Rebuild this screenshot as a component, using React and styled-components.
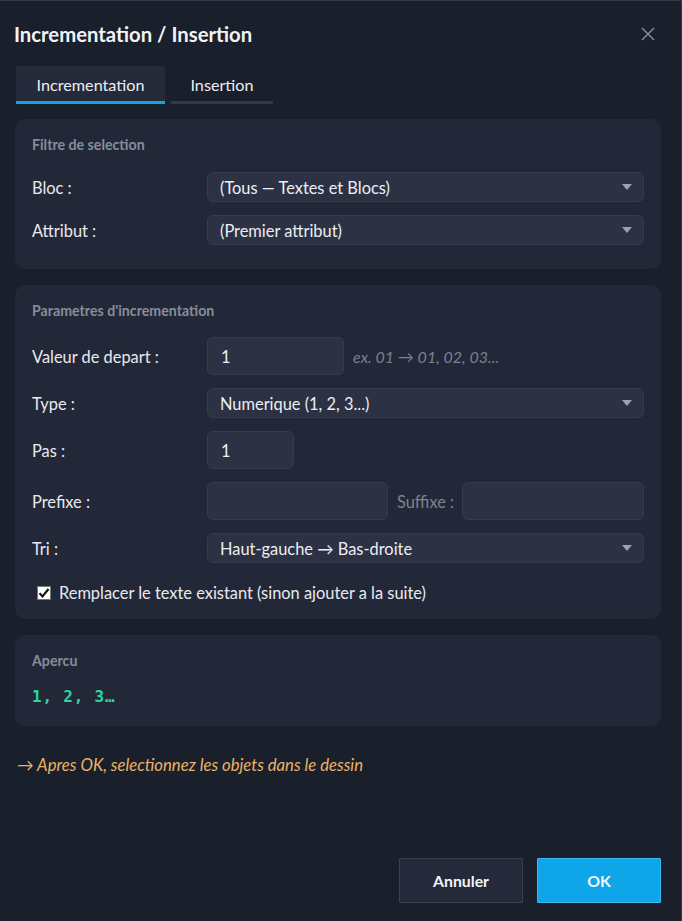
import React from "react";
import styled, { createGlobalStyle } from "styled-components";

const Global = createGlobalStyle`
  html, body { margin: 0; padding: 0; background: #1a1f2c; }
  * { box-sizing: border-box; }
  body { font-family: Lato, "Noto Sans", "Liberation Sans", sans-serif; }
`;

const Dialog = styled.div`
  width: 682px;
  height: 921px;
  background: #1a1f2c;
  border-top: 1px solid #343949;
  border-right: 1px solid #343949;
  padding: 0 20px 0 15px;
  display: flex;
  flex-direction: column;
  color: #e8eaf0;
`;

const Header = styled.div`
  height: 65px;
  display: flex;
  align-items: center;
  justify-content: space-between;
  padding-top: 1px;
`;

const Title = styled.h1`
  margin: 0 0 0 -1px;
  font-size: 20.3px;
  font-weight: 700;
  color: #f2f3f7;
`;

const Close = styled.button`
  background: none;
  border: none;
  padding: 0;
  margin-right: 5px;
  width: 16px;
  height: 16px;
  color: #8c91a0;
  display: flex;
  align-items: center;
  justify-content: center;
`;

const Tabs = styled.div`
  display: flex;
  gap: 6px;
  margin-left: 1px;
  height: 38px;
`;

const Tab = styled.div`
  width: ${(p) => p.$w}px;
  display: flex;
  align-items: center;
  justify-content: center;
  font-size: 16.2px;
  color: #eceef3;
  background: ${(p) => (p.$active ? "#252a3a" : "transparent")};
  border-bottom: 3px solid ${(p) => (p.$active ? "#0ea5e9" : "#343949")};
  padding-top: 2px;
`;

const Panels = styled.div`
  display: flex;
  flex-direction: column;
  gap: 16px;
  margin-top: 15px;
`;

const Panel = styled.section`
  background: #232838;
  border-radius: 10px;
  padding: 17px 17px ${(p) => p.$pb}px 17px;
  display: flex;
  flex-direction: column;
`;

const PanelTitle = styled.div`
  font-size: 14.2px;
  font-weight: 700;
  color: #878c9c;
  line-height: 17px;
  margin-bottom: ${(p) => p.$mb}px;
`;

const Rows = styled.div`
  display: flex;
  flex-direction: column;
  gap: 13px;
`;

const Row = styled.div`
  display: flex;
  align-items: center;
`;

const Label = styled.label`
  width: 175px;
  flex: none;
  font-size: 16.4px;
  color: #e8eaf0;
`;

const Select = styled.div`
  flex: 1;
  height: 30px;
  background: #2c3144;
  border: 1px solid #363b4e;
  border-radius: 6px;
  display: flex;
  align-items: center;
  justify-content: space-between;
  padding: 0 11px 0 12px;
  font-size: 16.4px;
  color: #eceef3;
`;

const Input = styled.div`
  width: ${(p) => p.$w}px;
  flex: ${(p) => (p.$grow ? 1 : "none")};
  height: 38px;
  background: #2c3144;
  border: 1px solid #363b4e;
  border-radius: 6px;
  display: flex;
  align-items: center;
  padding: 0 13px;
  font-size: 16.4px;
  color: #eceef3;
`;

const Hint = styled.span`
  margin-left: 9px;
  font-size: 16px;
  font-style: italic;
  color: #7b8091;
`;

const SideLabel = styled.span`
  margin: 0 8px 0 9px;
  font-size: 16.4px;
  color: #7d8293;
`;

const CheckRow = styled.label`
  display: flex;
  align-items: center;
  gap: 8px;
  margin: 20px 0 0 5px;
  font-size: 16.4px;
  color: #e8eaf0;
`;

const Box = styled.span`
  width: 14px;
  height: 14px;
  background: #ffffff;
  border: 1px solid #767676;
  display: flex;
  align-items: center;
  justify-content: center;
`;

const Preview = styled.div`
  font-family: "DejaVu Sans Mono", "Liberation Mono", monospace;
  font-weight: 700;
  font-size: 16px;
  color: #2ed3a0;
  letter-spacing: 0.8px;
`;

const Note = styled.p`
  margin: 29px 0 0 2px;
  font-size: 16.7px;
  font-style: italic;
  color: #e9b465;
`;

const Footer = styled.div`
  margin-top: auto;
  margin-bottom: 18px;
  display: flex;
  justify-content: flex-end;
  gap: 14px;
`;

const Button = styled.button`
  width: 124px;
  height: 45px;
  font-family: inherit;
  font-size: 15.8px;
  font-weight: 700;
  color: #f4f5f8;
  background: ${(p) => (p.$primary ? "#0ea5e9" : "#252a3a")};
  border: 1px solid ${(p) => (p.$primary ? "#3ab9f2" : "#3a3f51")};
  border-radius: 1px;
`;

const Caret = () => (
  <svg width="10" height="6" viewBox="0 0 10 6">
    <path d="M0 0h10L5 6z" fill="#9da1ae" />
  </svg>
);

const Dropdown = ({ value }) => (
  <Select>
    <span>{value}</span>
    <Caret />
  </Select>
);

export default function App() {
  return (
    <>
      <Global />
      <Dialog>
        <Header>
          <Title>Incrementation / Insertion</Title>
          <Close aria-label="Fermer">
            <svg width="14" height="14" viewBox="0 0 14 14">
              <path d="M1 1l12 12M13 1L1 13" stroke="currentColor" strokeWidth="1.4" />
            </svg>
          </Close>
        </Header>

        <Tabs>
          <Tab $active $w={149}>Incrementation</Tab>
          <Tab $w={102}>Insertion</Tab>
        </Tabs>

        <Panels>
          <Panel $pb={24}>
            <PanelTitle $mb={19}>Filtre de selection</PanelTitle>
            <Rows>
              <Row>
                <Label>Bloc :</Label>
                <Dropdown value="(Tous — Textes et Blocs)" />
              </Row>
              <Row>
                <Label>Attribut :</Label>
                <Dropdown value="(Premier attribut)" />
              </Row>
            </Rows>
          </Panel>

          <Panel $pb={17}>
            <PanelTitle $mb={18}>Parametres d'incrementation</PanelTitle>
            <Rows>
              <Row>
                <Label>Valeur de depart :</Label>
                <Input $w={137}>1</Input>
                <Hint>ex. 01 → 01, 02, 03...</Hint>
              </Row>
              <Row>
                <Label>Type :</Label>
                <Dropdown value="Numerique (1, 2, 3...)" />
              </Row>
              <Row>
                <Label>Pas :</Label>
                <Input $w={87}>1</Input>
              </Row>
              <Row>
                <Label>Prefixe :</Label>
                <Input $w={181} />
                <SideLabel>Suffixe :</SideLabel>
                <Input $grow />
              </Row>
              <Row>
                <Label>Tri :</Label>
                <Dropdown value="Haut-gauche → Bas-droite" />
              </Row>
            </Rows>
            <CheckRow>
              <Box>
                <svg width="12" height="12" viewBox="0 0 12 12">
                  <path d="M1.5 6.2l3 3.2 6-7.4" fill="none" stroke="#111" strokeWidth="2.2" />
                </svg>
              </Box>
              Remplacer le texte existant (sinon ajouter a la suite)
            </CheckRow>
          </Panel>

          <Panel $pb={20}>
            <PanelTitle $mb={18}>Apercu</PanelTitle>
            <Preview>1, 2, 3…</Preview>
          </Panel>
        </Panels>

        <Note>→ Apres OK, selectionnez les objets dans le dessin</Note>

        <Footer>
          <Button>Annuler</Button>
          <Button $primary>OK</Button>
        </Footer>
      </Dialog>
    </>
  );
}
